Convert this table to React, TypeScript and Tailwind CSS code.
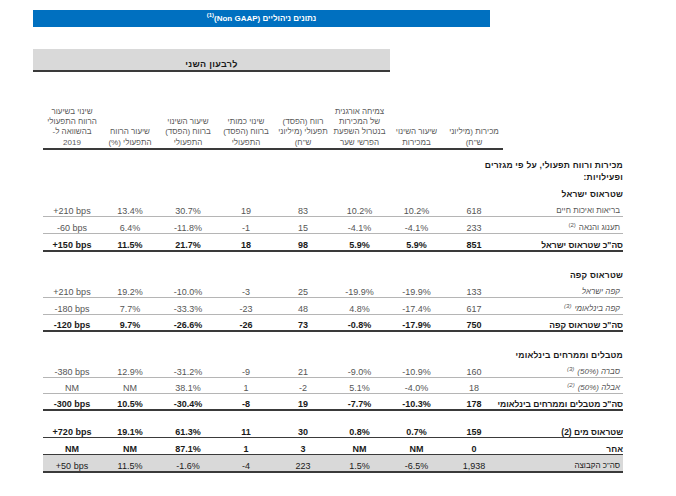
import React from "react";

type RowKind = "normal" | "total" | "solid" | "grand";

type DataRow = {
  label: React.ReactNode;
  values: string[]; // right-to-left: sales, change, organic, op, qty, op change, margin, margin change
  kind: RowKind;
  h: string;
  italic?: boolean;
};

const GRID =
  "grid grid-cols-[120px_58px_57px_57px_56px_58px_58px_58px_58px]";

const headers: React.ReactNode[] = [
  <>מכירות (מיליוני<br />ש"ח)</>,
  <>שיעור השינוי<br />במכירות</>,
  <>צמיחה אורגנית<br />של המכירות<br />בנטרול השפעת<br />הפרשי שער</>,
  <>רווח (הפסד)<br />תפעולי (מיליוני<br />ש"ח)</>,
  <>שינוי כמותי<br />ברווח (הפסד)<br />התפעולי</>,
  <>שיעור השינוי<br />ברווח (הפסד)<br />התפעולי</>,
  <>שיעור הרווח<br />התפעולי (%)</>,
  <>שינוי בשיעור<br />הרווח התפעולי<br />בהשוואה ל-<br />2019</>,
];

function Sup({ n }: { n: number }) {
  return (
    <span className="relative -top-[3px] text-[6px] mr-[3px]" dir="ltr">
      ({n})
    </span>
  );
}

function Heading({ children, h }: { children: React.ReactNode; h: string }) {
  return (
    <div className={`${h} flex items-end`}>
      <div className="text-[8.5px] leading-[12px] font-bold text-[#1a1a1a] tracking-[0.2px]">
        {children}
      </div>
    </div>
  );
}

function Row({ row }: { row: DataRow }) {
  const border =
    row.kind === "normal"
      ? "border-b border-[#b5b5b5]"
      : row.kind === "solid"
      ? "border-b-[1.5px] border-[#3a3a3a]"
      : "border-b-2 border-[#3a3a3a]";
  const bg = row.kind === "grand" ? "bg-[#d9d9d9]" : "";
  const bold = row.kind === "total" || row.kind === "solid";
  const color = row.kind === "normal" ? "text-[#555555]" : "text-[#1a1a1a]";
  return (
    <div className={`${GRID} ${row.h} ${border} ${bg} ${color} items-end`}>
      <div
        className={`leading-[10px] whitespace-nowrap ${
          bold ? "text-[8.5px] font-bold pr-0" : "text-[8px] pr-[3px]"
        } ${row.italic ? "italic" : ""}`}
      >
        {row.label}
      </div>
      {row.values.map((v, i) => (
        <div
          key={i}
          dir="ltr"
          className={`text-center text-[9px] leading-[10px] ${bold ? "font-bold" : ""}`}
        >
          {v}
        </div>
      ))}
    </div>
  );
}

const israel: DataRow[] = [
  { label: "בריאות ואיכות חיים", values: ["618", "10.2%", "10.2%", "83", "19", "30.7%", "13.4%", "+210 bps"], kind: "normal", h: "h-[17px]" },
  { label: <>תענוג והנאה<Sup n={2} /></>, values: ["233", "-4.1%", "-4.1%", "15", "-1", "-11.8%", "6.4%", "-60 bps"], kind: "normal", h: "h-[17px]" },
  { label: 'סה"כ שטראוס ישראל', values: ["851", "5.9%", "5.9%", "98", "18", "21.7%", "11.5%", "+150 bps"], kind: "total", h: "h-[18px]" },
];

const coffee: DataRow[] = [
  { label: "קפה ישראל", values: ["133", "-19.9%", "-19.9%", "25", "-3", "-10.0%", "19.2%", "+210 bps"], kind: "normal", h: "h-[17px]", italic: true },
  { label: <>קפה בינלאומי<Sup n={3} /></>, values: ["617", "-17.4%", "4.8%", "48", "-23", "-33.3%", "7.7%", "-180 bps"], kind: "normal", h: "h-[17px]", italic: true },
  { label: 'סה"כ שטראוס קפה', values: ["750", "-17.9%", "-0.8%", "73", "-26", "-26.6%", "9.7%", "-120 bps"], kind: "total", h: "h-[17px]" },
];

const dips: DataRow[] = [
  { label: <>סברה (50%)<Sup n={3} /></>, values: ["160", "-10.9%", "-9.0%", "21", "-9", "-31.2%", "12.9%", "-380 bps"], kind: "normal", h: "h-[17px]", italic: true },
  { label: <>אבלה (50%)<Sup n={2} /></>, values: ["18", "-4.0%", "5.1%", "-2", "1", "38.1%", "NM", "NM"], kind: "normal", h: "h-[16px]", italic: true },
  { label: 'סה"כ מטבלים וממרחים בינלאומי', values: ["178", "-10.3%", "-7.7%", "19", "-8", "-30.4%", "10.5%", "-300 bps"], kind: "total", h: "h-[17px]" },
];

const bottom: DataRow[] = [
  { label: "שטראוס מים (2)", values: ["159", "0.7%", "0.8%", "30", "11", "61.3%", "19.1%", "+720 bps"], kind: "solid", h: "h-[27px]" },
  { label: "אחר", values: ["0", "NM", "NM", "3", "1", "87.1%", "NM", "NM"], kind: "solid", h: "h-[17px]" },
  { label: 'סה"כ הקבוצה', values: ["1,938", "-6.5%", "1.5%", "223", "-4", "-1.6%", "11.5%", "+50 bps"], kind: "grand", h: "h-[18px]" },
];

export default function App() {
  return (
    <div className="w-[676px] h-[496px] bg-white overflow-hidden font-['Liberation_Sans',Arial,sans-serif]">
      {/* Title bar */}
      <div
        dir="rtl"
        className="ml-[33px] mt-[10px] w-[457px] h-[17px] bg-[#0070c0] flex items-center justify-center text-white text-[8px] font-bold"
      >
        נתונים ניהוליים (Non GAAP)
        <span className="relative -top-[3px] text-[6px]" dir="ltr">(1)</span>
      </div>

      {/* Period header */}
      <div
        dir="rtl"
        className="ml-[33px] mt-[22px] w-[357px] h-[23px] bg-[#d9d9d9] border-b-2 border-[#3a3a3a] flex items-end justify-center text-[9px] leading-[12px] font-bold text-[#1a1a1a] tracking-[0.3px]"
      >
        לרבעון השני
      </div>

      <div dir="rtl" className="ml-[43px] w-[580px]">
        {/* Column headers */}
        <div className={`${GRID} h-[78px] items-end`}>
          <div />
          {headers.map((h, i) => (
            <div
              key={i}
              className="h-full flex items-end justify-center text-center border-b-2 border-[#3a3a3a] text-[8px] leading-[10.3px] text-[#5a5a5a] whitespace-nowrap"
            >
              <div>{h}</div>
            </div>
          ))}
        </div>

        <Heading h="h-[33px]">
          מכירות ורווח תפעולי, על פי מגזרים
          <br />
          ופעילויות:
        </Heading>

        <Heading h="h-[17px]">שטראוס ישראל</Heading>
        {israel.map((r, i) => (
          <Row key={i} row={r} />
        ))}

        <Heading h="h-[29px]">שטראוס קפה</Heading>
        {coffee.map((r, i) => (
          <Row key={i} row={r} />
        ))}

        <Heading h="h-[29px]">מטבלים וממרחים בינלאומי</Heading>
        {dips.map((r, i) => (
          <Row key={i} row={r} />
        ))}

        {bottom.map((r, i) => (
          <Row key={i} row={r} />
        ))}
      </div>
    </div>
  );
}
